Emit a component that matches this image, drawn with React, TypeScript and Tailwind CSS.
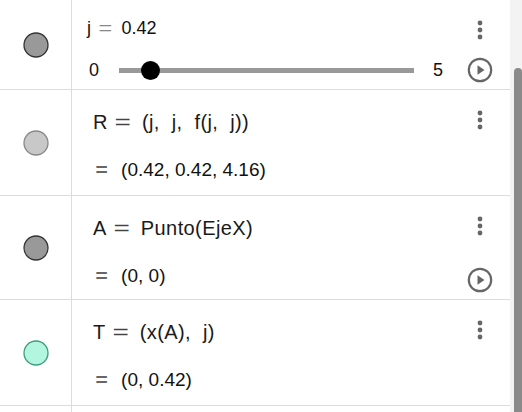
import React from "react";

const Dots = () => (
  <svg width="8" height="20" viewBox="0 0 8 20" className="block">
    <circle cx="4" cy="3" r="2.4" fill="#666" />
    <circle cx="4" cy="10" r="2.4" fill="#666" />
    <circle cx="4" cy="17" r="2.4" fill="#666" />
  </svg>
);

const Play = () => (
  <svg width="26" height="26" viewBox="0 0 26 26" className="block">
    <circle cx="13" cy="13" r="11.2" fill="none" stroke="#666" strokeWidth="2.2" />
    <path d="M10.5 8.2 L17.5 13 L10.5 17.8 Z" fill="#666" />
  </svg>
);

const Dot = ({ fill, stroke }: { fill: string; stroke: string }) => (
  <div className="w-[72px] shrink-0 border-r border-[#dcdcdc] flex items-center justify-center">
    <svg width="28" height="28" viewBox="0 0 28 28" className="block">
      <circle cx="14" cy="14" r="12" fill={fill} stroke={stroke} strokeWidth="1.3" />
    </svg>
  </div>
);

const Eq = () => (
  <span className="inline-block text-[#444] ml-[9px] mr-[13px] scale-x-[1.4]">=</span>
);

const ValEq = () => (
  <span className="inline-block text-[#666] font-bold mr-[14px] scale-x-[1.1]">=</span>
);

type RowProps = {
  h: string;
  fill: string;
  stroke: string;
  lhs: string;
  rhs: string;
  value: string;
  play?: boolean;
};

const Row = ({ h, fill, stroke, lhs, rhs, value, play }: RowProps) => (
  <div className={`flex border-b border-[#dcdcdc] ${h}`}>
    <Dot fill={fill} stroke={stroke} />
    <div className="flex-1 flex">
      <div className="flex-1 pl-[21px] pt-[20px] flex flex-col">
        <div className="h-[24px] leading-[24px] text-[20px] text-[#1a1a1a] whitespace-pre tracking-[0.4px]">
          {lhs}
          <Eq />
          {rhs}
        </div>
        <div className="mt-[24px] h-[24px] leading-[24px] text-[19px] text-[#111] pl-[3px] whitespace-pre">
          <ValEq />
          {value}
        </div>
      </div>
      <div className="w-[28px] mr-[16px] flex flex-col items-center pt-[20px]">
        <Dots />
        {play && (
          <div className="mt-[31px]">
            <Play />
          </div>
        )}
      </div>
    </div>
  </div>
);

export default function App() {
  return (
    <div
      className="w-[522px] h-[412px] overflow-hidden flex bg-white"
      style={{ fontFamily: '"Liberation Sans", Arial, sans-serif' }}
    >
      <div className="w-[510px] shrink-0 flex flex-col">
        <div className="flex border-b border-[#dcdcdc] h-[90px]">
          <Dot fill="#999999" stroke="#333" />
          <div className="flex-1 flex">
            <div className="flex-1 pl-[15px] pt-[16px] flex flex-col">
              <div className="h-[24px] leading-[24px] text-[18px] text-[#111] whitespace-pre">
                j<span className="inline-block text-[#888] ml-[9px] mr-[11px] scale-x-[1.3]">=</span>0.42
              </div>
              <div className="mt-[18px] h-[24px] flex items-center">
                <span className="text-[18px] text-[#111] w-[32px] pl-[2px]">0</span>
                <div className="relative w-[295px] h-[5px] bg-[#999]">
                  <div className="absolute left-[22px] top-[-7px] w-[19px] h-[19px] rounded-full bg-black" />
                </div>
                <span className="text-[18px] text-[#111] ml-[19px]">5</span>
              </div>
            </div>
            <div className="w-[28px] mr-[16px] flex flex-col items-center pt-[20px]">
              <Dots />
              <div className="mt-[17px]">
                <Play />
              </div>
            </div>
          </div>
        </div>
        <Row h="h-[106px]" fill="#c8c8c8" stroke="#888" lhs="R" rhs="(j,  j,  f(j,  j))" value="(0.42, 0.42, 4.16)" />
        <Row h="h-[104px]" fill="#999999" stroke="#333" lhs="A" rhs="Punto(EjeX)" value="(0, 0)" play />
        <Row h="h-[106px]" fill="#b3f6df" stroke="#3f9c80" lhs="T" rhs="(x(A),  j)" value="(0, 0.42)" />
        <div className="flex flex-1">
          <div className="w-[72px] border-r border-[#dcdcdc]" />
        </div>
      </div>
      <div className="flex-1 bg-[#f3f3f3] relative">
        <div className="absolute left-[4px] top-[68px] w-[8px] h-[400px] rounded-t-[4px] bg-[#8a8a8a]" />
      </div>
    </div>
  );
}
